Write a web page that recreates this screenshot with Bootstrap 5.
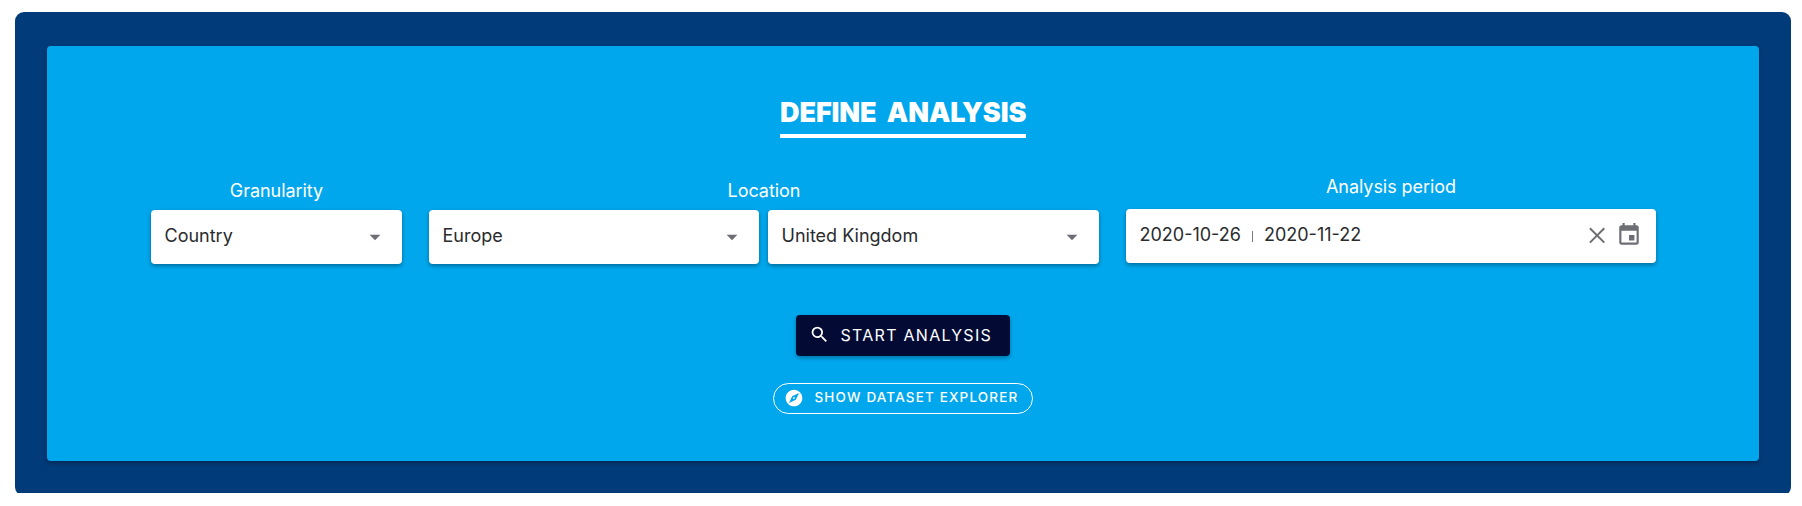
<!DOCTYPE html>
<html lang="en">
<head>
<meta charset="utf-8">
<meta name="viewport" content="width=device-width, initial-scale=1">
<title>Define analysis</title>
<link href="https://cdn.jsdelivr.net/npm/bootstrap@5.3.0/dist/css/bootstrap.min.css" rel="stylesheet">
<style>
body { font-family: Inter, "Liberation Sans", sans-serif; font-size: 18px; background: #fff; overflow: hidden; }
.page-clip { margin: 12px 11px 0 15px; height: 481px; }
.frame { height: 484px; padding: 34px 32px; background: #023b7a; border-radius: 9px; }
.panel { height: 415px; padding: 50px 103px 0 104px; background: #01a7ed; border-radius: 4px; box-shadow: 0 2px 4px rgba(0,0,0,.35); }
.heading { width: 246px; margin: 0 1px 0 0; font-size: 27px; line-height: 34px; font-weight: 900; letter-spacing: -.08px; padding: 0 0 4px 0; border-bottom: 4px solid #fff; word-spacing: 5px; white-space: nowrap; }
.fields { height: 94px; margin-top: 32px; gap: 27px; }
.fields .caption { line-height: 24px; padding-top: 9px; padding-bottom: 7px; letter-spacing: -.05px; }
.fields .period .caption { padding-top: 5px; padding-bottom: 10px; }
.field { height: 54px; padding: 0 14px 0 13.5px; color: #2a2b2d; background: #fff; border-radius: 4px; box-shadow: 0 2px 4px rgba(0,0,0,.35); text-align: left; }
.field span:not(.tick) { padding-bottom: 3px; }
.granularity { width: 251px; }
.location { width: 670px; }
.period { width: 530px; }
.pair { display: grid; grid-template-columns: 330px 331px; gap: 9px; }
.arrow { margin-right: 1px; }
.field svg { color: #6d6e73; }
.tick { width: 1px; height: 11px; background: #77787c; margin: 0 11px 0 11px; }
.start { width: 214px; height: 41px; margin: 51px 2px 0 0; background: #030b35; border-radius: 4px; box-shadow: 0 2px 4px rgba(0,0,0,.3); font-size: 16px; letter-spacing: 1.27px; padding: 0 0 1px 13px; font-weight: 400; border: 0; color: #fff; white-space: nowrap; }
.start svg { margin-top: -2px; }
.explore { width: 260px; height: 31px; margin: 27px 2px 0 0; border: 1px solid #fff; border-radius: 16px; font-size: 13.5px; letter-spacing: 1.15px; padding: 0 0 2px 10px; font-weight: 500; color: #fff; white-space: nowrap; }
.cal { margin: -3px 0 0 7px; }
.btn-text { margin-left: 11px; }
</style>
</head>
<body>
<div class="page-clip overflow-hidden">
<main class="frame">
<section class="panel text-white d-flex flex-column align-items-center">
  <h1 class="heading">DEFINE ANALYSIS</h1>
  <div class="fields d-flex w-100 text-center">
    <div class="granularity">
      <div class="caption">Granularity</div>
      <div class="field d-flex align-items-center justify-content-between"><span>Country</span>
        <svg class="arrow" width="24" height="24" viewBox="0 0 24 24"><path fill="currentColor" d="M6.6 9.7h10.8L12 15.2z"/></svg></div>
    </div>
    <div class="location">
      <div class="caption">Location</div>
      <div class="pair">
        <div class="field d-flex align-items-center justify-content-between"><span>Europe</span>
          <svg class="arrow" width="24" height="24" viewBox="0 0 24 24"><path fill="currentColor" d="M6.6 9.7h10.8L12 15.2z"/></svg></div>
        <div class="field d-flex align-items-center justify-content-between"><span>United Kingdom</span>
          <svg class="arrow" width="24" height="24" viewBox="0 0 24 24"><path fill="currentColor" d="M6.6 9.7h10.8L12 15.2z"/></svg></div>
      </div>
    </div>
    <div class="period">
      <div class="caption">Analysis period</div>
      <div class="field d-flex align-items-center"><span>2020-10-26</span><span class="tick"></span><span>2020-11-22</span>
        <svg class="ms-auto" width="24" height="24" viewBox="0 0 24 24"><path d="M4.9 4.2l14.4 14.4M19.3 4.2L4.9 18.6" stroke="currentColor" stroke-width="2"/></svg>
        <svg class="cal" width="26" height="26" viewBox="0 0 24 24"><path fill="currentColor" d="M17 12h-5v5h5v-5zM16 1v2H8V1H6v2H5c-1.11 0-2 .9-2 2v14c0 1.1.89 2 2 2h14c1.1 0 2-.9 2-2V5c0-1.1-.9-2-2-2h-1V1h-2zm3 18H5V8h14v11z"/></svg></div>
    </div>
  </div>
  <button class="start d-flex align-items-center" type="button">
    <svg width="21" height="21" viewBox="0 0 24 24"><path fill="currentColor" d="M15.5 14h-.79l-.28-.27A6.47 6.47 0 0 0 16 9.5 6.5 6.5 0 1 0 9.5 16c1.61 0 3.09-.59 4.23-1.57l.27.28v.79l5 4.99L20.49 19l-4.99-5zm-6 0C7.01 14 5 11.99 5 9.5S7.01 5 9.5 5 14 7.01 14 9.5 11.99 14 9.5 14z"/></svg>
    <span class="btn-text">START ANALYSIS</span></button>
  <button class="explore d-flex align-items-center bg-transparent" type="button">
    <svg width="20" height="20" viewBox="0 0 24 24"><path fill="currentColor" d="M12 10.9c-.61 0-1.1.49-1.1 1.1s.49 1.1 1.1 1.1c.61 0 1.1-.49 1.1-1.1s-.49-1.1-1.1-1.1zM12 2C6.48 2 2 6.48 2 12s4.48 10 10 10 10-4.48 10-10S17.52 2 12 2zm2.19 12.19L6 18l3.81-8.19L18 6l-3.81 8.19z"/></svg>
    <span class="btn-text">SHOW DATASET EXPLORER</span></button>
</section>
</main>
</div>
<script src="https://cdn.jsdelivr.net/npm/bootstrap@5.3.0/dist/js/bootstrap.bundle.min.js"></script>
</body>
</html>
